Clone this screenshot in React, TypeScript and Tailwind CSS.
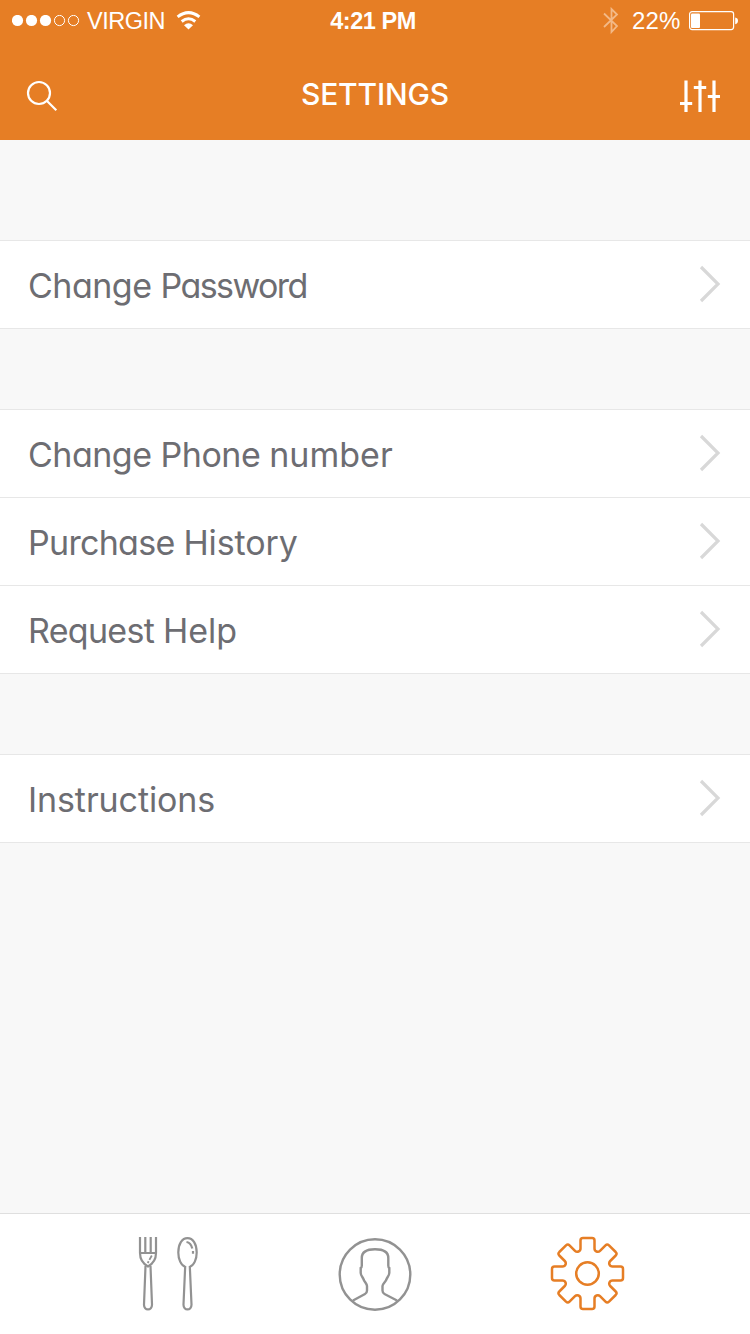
import React from "react";

const LABEL_FONT = "font-['Inter',sans-serif] [font-feature-settings:'cv11','ss03']";
const STATUS_FONT = "font-['Liberation_Sans',sans-serif]";

function StatusBar() {
  return (
    <div className={`grid h-[42px] grid-cols-3 items-center text-[24px] leading-[42px] text-white ${STATUS_FONT}`}>
      <div className="flex items-center pl-3">
        <svg width="68" height="12" viewBox="0 0 68 12" fill="#fff">
          <circle cx="5.5" cy="5.5" r="5.6" />
          <circle cx="19.5" cy="5.5" r="5.6" />
          <circle cx="33.5" cy="5.5" r="5.6" />
          <circle cx="47.5" cy="5.5" r="5.1" fill="none" stroke="#fff" />
          <circle cx="61.5" cy="5.5" r="5.1" fill="none" stroke="#fff" />
        </svg>
        <span className="ml-[7px] w-[78px] whitespace-nowrap text-[23.5px] tracking-[-0.5px]">VIRGIN</span>
        <svg className="ml-[11px]" width="26" height="20" viewBox="0 0 26 20" fill="none" stroke="#fff" strokeWidth="3">
          <path d="M1.6 5.9Q12.5-2.6 23.4 5.9" />
          <path d="M5.7 10.5Q12.5 5.1 19.3 10.5" />
          <path d="M8 14.2Q12.5 10.5 17 14.2L12.5 18.6Z" fill="#fff" stroke="none" />
        </svg>
      </div>
      <span className="whitespace-nowrap pr-[4px] text-center text-[23.5px] font-bold tracking-[-0.45px]">4:21 PM</span>
      <div className="flex items-center justify-end pr-[11px]">
        <svg className="mr-[1px]" width="16" height="28" viewBox="0 0 16 28" fill="none" stroke="#f3b987" strokeWidth="1.8">
          <path d="M1 6.5L14 19L8.5 25V2L14 7.5L1 20" />
        </svg>
        <span className="ml-[12px] w-[50px] whitespace-nowrap tracking-[0.2px]">22%</span>
        <svg className="ml-[7px]" width="50" height="20" viewBox="0 0 50 20" fill="none" stroke="#fff">
          <rect x="0.6" y="0.6" width="44" height="18" rx="2.5" strokeWidth="1.2" />
          <rect x="2" y="2.5" width="9" height="14.5" rx="1" fill="#fff" stroke="none" />
          <path d="M46.2 6.5Q49 7 49 9.8T46.2 13.2Z" fill="#fff" stroke="none" />
        </svg>
      </div>
    </div>
  );
}

function Header() {
  return (
    <header className="flex h-[140px] flex-col bg-[#e67e25]">
      <StatusBar />
      <div className="flex h-[98px] items-center justify-between pl-[26px] pr-[29px]">
        <svg className="mt-[9px]" width="42" height="32" viewBox="0 0 42 32" fill="none" stroke="#fff" strokeWidth="2.2">
          <circle cx="13" cy="13" r="11" />
          <path d="M20.8 20.8L30.3 30.3" />
        </svg>
        <h1 className={`mt-[7px] whitespace-nowrap pl-[3px] text-[30px] font-[450] tracking-[-0.15px] text-white ${LABEL_FONT}`}>SETTINGS</h1>
        <svg className="mt-[9px]" width="42" height="32" viewBox="0 0 42 32" fill="none" stroke="#fff" strokeWidth="3.2">
          <path d="M7 0.5V32M21 0.5V32M35 0.5V32M1 23.5H13.200M14.800 7.500H27.200M28.800 16.500H41" />
        </svg>
      </div>
    </header>
  );
}

type Word = { text: string; tracking: string };

function Row({ words }: { words: Word[] }) {
  return (
    <div className="flex h-[88px] items-center justify-between border-b border-[#e7e7e7] bg-white pl-[28px] pr-[29px]">
      <span className={`whitespace-pre pt-[2px] text-[34px] font-normal leading-[40px] text-[#6d6d72] ${LABEL_FONT}`}>
        {words.map((word) => (
          <span key={word.text} className={word.tracking}>{word.text}</span>
        ))}
      </span>
      <svg className="mb-[2px]" width="22" height="38" viewBox="0 0 22 38" fill="none" stroke="#d8d8d8" strokeWidth="3.2">
        <path d="M2 2L19 19L2 36" />
      </svg>
    </div>
  );
}

function TabBar() {
  return (
    <nav className="mt-auto grid h-[121px] grid-cols-[274px_202px_274px] border-t border-[#dfdfdf] bg-white pt-[22px]">
      <svg className="ml-[136px]" width="64" height="76" viewBox="136 1236 64 76" fill="none" stroke="#929292" strokeWidth="2.2">
        <path d="M140 1237V1253C140 1259 143.5 1264 148 1266.5C152.5 1264 156 1259 156 1253V1237M145.3 1237V1253M150.7 1237V1253M140 1253H156" />
        <path d="M145.5 1266L144 1304.5C143.8 1311 152.2 1311 152 1304.5L150.5 1266" />
        <path d="M151.8 1255.5L147.7 1263" strokeWidth="1.8" strokeDasharray="5 1.5 2 1" />
        <path d="M185.2 1266.8C181 1265.5 178.3 1259 178.3 1252.5C178.3 1244 182 1238.2 187.5 1238.2C193 1238.2 196.7 1244 196.7 1252.5C196.7 1259 194 1265.5 189.8 1266.8" />
        <path d="M185.2 1266L183.5 1304.5C183.3 1311 191.7 1311 191.5 1304.5L189.8 1266" />
        <path d="M186.5 1242C189.5 1242.5 191.5 1245 192.3 1248.5M193 1251V1253.8" />
      </svg>
      <svg className="mx-auto" width="76" height="76" viewBox="337 1236 76 76" fill="none" stroke="#929292" strokeWidth="2.4">
        <circle cx="375" cy="1274.5" r="35.3" />
        <path d="M353 1300.500L365 1294Q367 1293 367 1290.500V1286C367 1284 365 1282.500 363.800 1280C363 1277 361 1276.500 360.700 1273V1268Q361.800 1267.500 361.800 1265.500V1258C361.800 1251.500 367 1249.300 375 1249.300S388.300 1251.500 388.300 1258V1265.500Q388.300 1267.500 389.300 1268V1273C389 1276.500 387 1277 386.200 1280C385 1282.500 382.500 1284 382.500 1286V1290.500Q382.500 1293 384.500 1294L397 1300.500" />
      </svg>
      <svg className="ml-[73px]" width="76" height="76" viewBox="549 1236 76 76" fill="none" stroke="#e67e25" strokeWidth="2.5" strokeLinejoin="round">
        <circle cx="587.5" cy="1273.5" r="11.3" />
        <g transform="translate(587.5 1273.5)">
          <path d="M-7-33Q-7-35.5-4.5-35.5H4.5Q7-35.5 7-33V-25C7-22 10.5-20.7 12.5-22.7L18-28.2Q19.7-29.9 21.5-28.2L28.2-21.5Q29.9-19.7 28.2-18L22.7-12.5C20.7-10.5 22-7 25-7H33Q35.5-7 35.5-4.5V4.5Q35.5 7 33 7H25C22 7 20.7 10.5 22.7 12.5L28.2 18Q29.9 19.7 28.2 21.5L21.5 28.2Q19.7 29.9 18 28.2L12.5 22.7C10.5 20.7 7 22 7 25V33Q7 35.5 4.5 35.5H-4.5Q-7 35.5-7 33V25C-7 22-10.5 20.7-12.5 22.7L-18 28.2Q-19.7 29.9-21.5 28.2L-28.2 21.5Q-29.9 19.7-28.2 18L-22.7 12.5C-20.7 10.5-22 7-25 7H-33Q-35.5 7-35.5 4.5V-4.5Q-35.5-7-33-7H-25C-22-7-20.7-10.5-22.7-12.5L-28.2-18Q-29.9-19.7-28.2-21.5L-21.5-28.2Q-19.7-29.9-18-28.2L-12.5-22.7C-10.5-20.7-7-22-7-25Z" />
        </g>
      </svg>
    </nav>
  );
}

export default function App() {
  return (
    <div className="flex h-[1334px] w-[750px] flex-col overflow-hidden bg-[#f8f8f8]">
      <Header />
      <main className="flex flex-col gap-20 pt-[100px]">
        <section className="border-t border-[#e7e7e7]">
          <Row words={[{ text: "Change ", tracking: "tracking-[-0.5px]" }, { text: "Password", tracking: "tracking-[-1.6px]" }]} />
        </section>
        <section className="border-t border-[#e7e7e7]">
          <Row words={[{ text: "Change ", tracking: "tracking-[-0.5px]" }, { text: "Phone ", tracking: "tracking-[-0.5px]" }, { text: "number", tracking: "tracking-[0px]" }]} />
          <Row words={[{ text: "Purchase ", tracking: "tracking-[-0.7px]" }, { text: "History", tracking: "tracking-[-0.1px]" }]} />
          <Row words={[{ text: "Request ", tracking: "tracking-[-0.7px]" }, { text: "Help", tracking: "tracking-[0px]" }]} />
        </section>
        <section className="border-t border-[#e7e7e7]">
          <Row words={[{ text: "Instructions", tracking: "tracking-[-0.1px]" }]} />
        </section>
      </main>
      <TabBar />
    </div>
  );
}
